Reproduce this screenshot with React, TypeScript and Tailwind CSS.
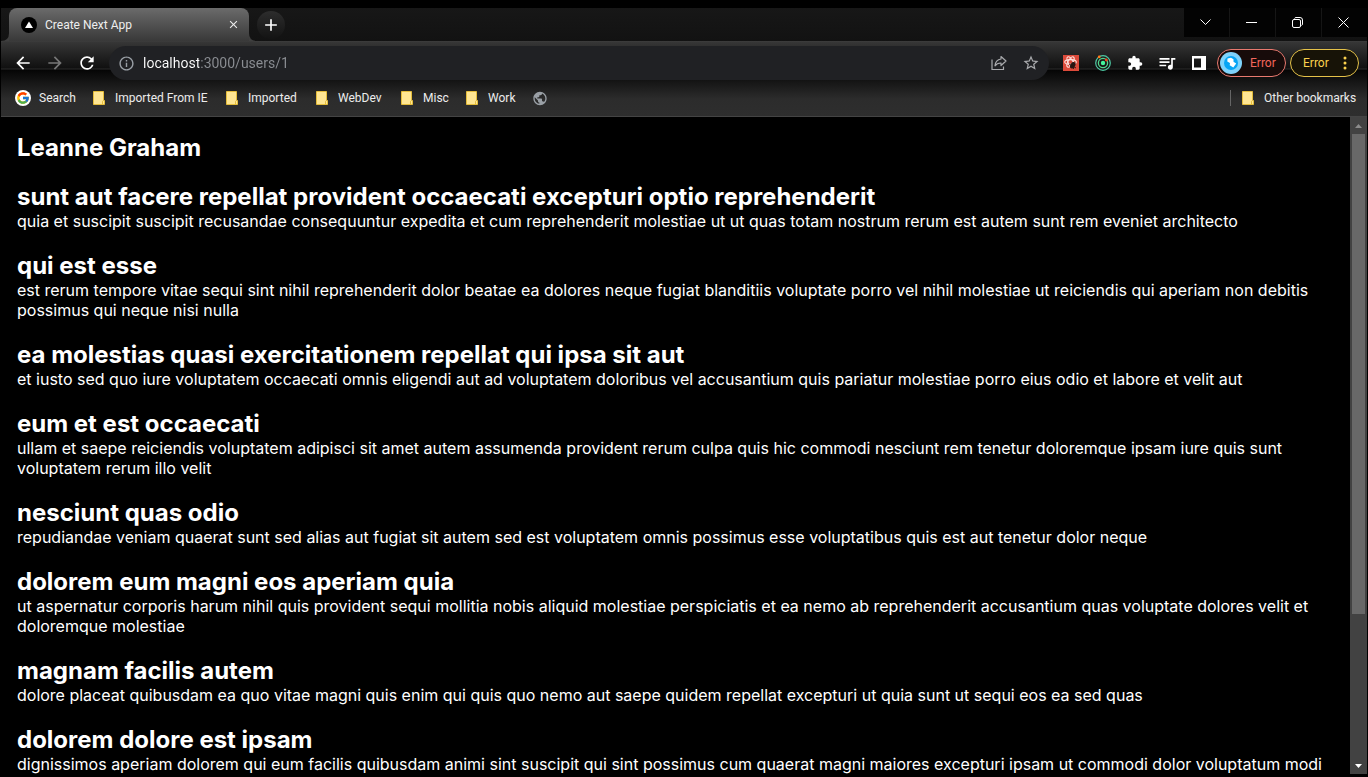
import type { ReactNode } from "react";
import {
  MdAdd,
  MdArrowBack,
  MdArrowForward,
  MdClose,
  MdExtension,
  MdInfoOutline,
  MdPublic,
  MdQueueMusic,
  MdRefresh,
  MdStarBorder,
} from "react-icons/md";
import { FcGoogle } from "react-icons/fc";

const posts = [
  {
    title: "sunt aut facere repellat provident occaecati excepturi optio reprehenderit",
    body: "quia et suscipit suscipit recusandae consequuntur expedita et cum reprehenderit molestiae ut ut quas totam nostrum rerum est autem sunt rem eveniet architecto",
  },
  {
    title: "qui est esse",
    body: "est rerum tempore vitae sequi sint nihil reprehenderit dolor beatae ea dolores neque fugiat blanditiis voluptate porro vel nihil molestiae ut reiciendis qui aperiam non debitis possimus qui neque nisi nulla",
  },
  {
    title: "ea molestias quasi exercitationem repellat qui ipsa sit aut",
    body: "et iusto sed quo iure voluptatem occaecati omnis eligendi aut ad voluptatem doloribus vel accusantium quis pariatur molestiae porro eius odio et labore et velit aut",
  },
  {
    title: "eum et est occaecati",
    body: "ullam et saepe reiciendis voluptatem adipisci sit amet autem assumenda provident rerum culpa quis hic commodi nesciunt rem tenetur doloremque ipsam iure quis sunt voluptatem rerum illo velit",
  },
  {
    title: "nesciunt quas odio",
    body: "repudiandae veniam quaerat sunt sed alias aut fugiat sit autem sed est voluptatem omnis possimus esse voluptatibus quis est aut tenetur dolor neque",
  },
  {
    title: "dolorem eum magni eos aperiam quia",
    body: "ut aspernatur corporis harum nihil quis provident sequi mollitia nobis aliquid molestiae perspiciatis et ea nemo ab reprehenderit accusantium quas voluptate dolores velit et doloremque molestiae",
  },
  {
    title: "magnam facilis autem",
    body: "dolore placeat quibusdam ea quo vitae magni quis enim qui quis quo nemo aut saepe quidem repellat excepturi ut quia sunt ut sequi eos ea sed quas",
  },
  {
    title: "dolorem dolore est ipsam",
    body: "dignissimos aperiam dolorem qui eum facilis quibusdam animi sint suscipit qui sint possimus cum quaerat magni maiores excepturi ipsam ut commodi dolor voluptatum modi",
  },
];

function FolderIcon() {
  return (
    <svg width="12" height="14" viewBox="0 0 12 14" className="shrink-0" aria-hidden="true">
      <path d="M.5.5h10v9h1v4H.5z" fill="#ffe693" stroke="#e5bd3b" />
      <path d="M9.5 13.5v-3.2l1-.8" fill="none" stroke="#e5bd3b" />
    </svg>
  );
}

function ShareIcon() {
  return (
    <svg width="16" height="16" viewBox="0 0 16 16" fill="none" stroke="#a9aaad" strokeWidth="1.2" aria-hidden="true">
      <path d="M1 4.500v10h11.500v-3" />
      <path d="M10 1.500 15 6l-5 4.500V8C7.300 8 5.300 8.800 4 10.800 4.300 7.300 6.200 4.500 10 4z" strokeLinejoin="round" />
    </svg>
  );
}

function ReactDevIcon() {
  return (
    <svg width="16" height="16" viewBox="0 0 16 16" aria-hidden="true">
      <path d="M0 0h16v16H0z" fill="#dc4a3a" />
      <g fill="none" stroke="#ffe3df" strokeWidth="1.1">
        <ellipse cx="7.500" cy="7" rx="5.800" ry="2.400" />
        <ellipse cx="7.500" cy="7" rx="5.800" ry="2.400" transform="rotate(60 7.500 7)" />
        <ellipse cx="7.500" cy="7" rx="5.800" ry="2.400" transform="rotate(120 7.500 7)" />
      </g>
      <ellipse cx="9.800" cy="10.300" rx="2.400" ry="3.400" transform="rotate(30 9.800 10.300)" fill="#2a1512" />
      <path d="m6 9 7 4M7 12.500l5.500-4.500M10 7l.5 7" stroke="#2a1512" strokeWidth=".9" />
    </svg>
  );
}

function RadarIcon() {
  return (
    <svg width="16" height="16" viewBox="0 0 16 16" fill="none" aria-hidden="true">
      <circle cx="8" cy="8" r="7.300" stroke="#4fc9a4" strokeWidth="1.2" />
      <circle cx="8" cy="8" r="4.600" stroke="#52d68c" strokeWidth="1.3" />
      <circle cx="8" cy="8" r="2.200" fill="#45f59b" />
      <circle cx="4.200" cy="1.900" r="1.400" fill="#ff7a1a" />
      <circle cx="11.300" cy="5" r="1.400" fill="#f4481e" />
    </svg>
  );
}

function SidePanelIcon() {
  return (
    <svg width="14" height="14" viewBox="0 0 14 14" aria-hidden="true">
      <path fillRule="evenodd" d="M0 0h14v14H0zM2 2.500v9h7v-9z" fill="#fff" />
    </svg>
  );
}

function AvatarIcon() {
  return (
    <svg width="22" height="22" viewBox="0 0 22 22" className="shrink-0" aria-hidden="true">
      <circle cx="11" cy="11" r="11" fill="#7fd3fb" />
      <circle cx="11" cy="11" r="7" fill="#06a5f5" />
      <path d="M7.500 6.500 11 5.800l2.500 1.500v2.500l2.700 1.700-2.900 4-3.600-2.300.3-2.200-2.700-1.500z" fill="#fff" />
    </svg>
  );
}

function Bookmark({ icon, label, className }: { icon: ReactNode; label: string; className: string }) {
  return (
    <a href="#" aria-label={label} className={`flex shrink-0 items-center whitespace-nowrap ${className}`}>
      {icon}
      {label !== "Site" && label}
    </a>
  );
}

function TabStrip() {
  return (
    <div className="flex h-[33px] bg-linear-to-b from-[#171717] to-[#121212]">
      <svg width="8" height="8" viewBox="0 0 8 8" className="self-end" aria-hidden="true">
        <path d="M8 0Q8 8 0 8h8z" fill="#3f3f3f" />
      </svg>
      <div className="flex w-60 items-center rounded-t-lg bg-linear-to-b from-[#6b6b6b] to-[#393939] pr-2 pl-3">
        <svg width="16" height="16" viewBox="0 0 16 16" aria-hidden="true">
          <circle cx="8" cy="8" r="8" fill="#000" />
          <path d="m8 4.500 4 6.500H4z" fill="#fff" />
        </svg>
        <span className="ml-2 flex-1">Create Next App</span>
        <button aria-label="Close tab" className="flex size-4 items-center justify-center">
          <MdClose size={13} />
        </button>
      </div>
      <svg width="8" height="8" viewBox="0 0 8 8" className="self-end" aria-hidden="true">
        <path d="M0 0q0 8 8 8H0z" fill="#3f3f3f" />
      </svg>
      <button
        aria-label="New tab"
        className="mt-[3px] flex size-7 items-center justify-center rounded-full bg-linear-to-b from-[#2d2d2d] to-[#131313] text-white"
      >
        <MdAdd size={20} />
      </button>
      <div className="ml-auto grid h-[29px] grid-cols-4 gap-px text-white">
        <button aria-label="Search tabs" className="flex w-[45px] items-center justify-center bg-[#030303] pr-0.5">
          <svg width="11" height="7" viewBox="0 0 11 7" fill="none" stroke="currentColor"><path d="m.5.5 5 5 5-5" /></svg>
        </button>
        <button aria-label="Minimize" className="flex w-[45px] items-center justify-center bg-[#030303] pr-0.5">
          <svg width="11" height="1" viewBox="0 0 11 1"><path d="M0 0h11v1H0z" fill="currentColor" /></svg>
        </button>
        <button aria-label="Restore" className="flex w-[45px] items-center justify-center bg-[#030303] pr-0.5">
          <svg width="11" height="11" viewBox="0 0 11 11" fill="none" stroke="currentColor">
            <rect x=".5" y="2.500" width="8" height="8" rx="1.500" />
            <path d="M2.500 1.500q.4-1 1.500-1h4q2.500 0 2.500 2.500v4q0 1-1 1.500" />
          </svg>
        </button>
        <button aria-label="Close" className="flex w-[45px] items-center justify-center bg-[#030303] pr-0.5">
          <svg width="11" height="11" viewBox="0 0 11 11" stroke="currentColor"><path d="m.5.5 10 10M10.500.5l-10 10" /></svg>
        </button>
      </div>
    </div>
  );
}

function Toolbar() {
  return (
    <div className="flex h-11 items-center pr-2 pl-3 text-white">
      <button aria-label="Back"><MdArrowBack size={20} /></button>
      <button aria-label="Forward" className="ml-3 text-[#777777]"><MdArrowForward size={20} /></button>
      <button aria-label="Reload" className="ml-3"><MdRefresh size={20} /></button>
      <div className="ml-3 flex h-[34px] flex-1 items-center rounded-full bg-[#202124] pr-[9px] pl-[9px] text-[#a9aaad]">
        <MdInfoOutline size={17} className="text-[#9aa0a6]" aria-hidden="true" />
        <input
          type="text"
          aria-label="Address"
          defaultValue="localhost:3000/users/1"
          className="ml-2 h-6 min-w-0 flex-1 bg-linear-to-r from-white from-[56px] to-[#8b8e93] to-[56px] bg-clip-text text-sm text-transparent outline-none"
        />
        <button aria-label="Share this page" className="mr-[15px]"><ShareIcon /></button>
        <button aria-label="Bookmark this tab"><MdStarBorder size={18} /></button>
      </div>
      <div className="ml-[14px] flex items-center gap-4">
        <button aria-label="React Developer Tools"><ReactDevIcon /></button>
        <button aria-label="Radar"><RadarIcon /></button>
        <button aria-label="Extensions"><MdExtension size={16} /></button>
        <button aria-label="Media controls" className="-mx-0.5"><MdQueueMusic size={20} /></button>
        <button aria-label="Side panel" className="ml-px"><SidePanelIcon /></button>
      </div>
      <button className="ml-[11px] flex h-7 w-[69px] items-center rounded-full border border-[#e8796f] bg-[#170b0a] pl-0.5 text-[#f2665c]">
        <AvatarIcon />
        <span className="ml-2">Error</span>
      </button>
      <button className="ml-1 flex h-7 w-[69px] items-center rounded-full border border-[#e5c249] bg-[#171307] pl-3 text-[#fbd24e]">
        <span className="flex-1 text-left">Error</span>
        <svg width="4" height="14" viewBox="0 0 4 14" fill="currentColor" className="mr-[11px]" aria-hidden="true">
          <circle cx="2" cy="2" r="1.500" />
          <circle cx="2" cy="7" r="1.500" />
          <circle cx="2" cy="12" r="1.500" />
        </svg>
      </button>
    </div>
  );
}

function BookmarksBar() {
  return (
    <nav aria-label="Bookmarks" className="flex h-[26px] items-center pr-[10px] pl-[14px] text-[#ececec]">
      <Bookmark
        label="Search"
        className="w-[78px] gap-2"
        icon={<span className="flex size-4 items-center justify-center rounded-full bg-white"><FcGoogle size={14} /></span>}
      />
      <Bookmark label="Imported From IE" className="w-[133px] gap-[10px]" icon={<FolderIcon />} />
      <Bookmark label="Imported" className="w-[90px] gap-[10px]" icon={<FolderIcon />} />
      <Bookmark label="WebDev" className="w-[85px] gap-[10px]" icon={<FolderIcon />} />
      <Bookmark label="Misc" className="w-[65px] gap-[10px]" icon={<FolderIcon />} />
      <Bookmark label="Work" className="w-[66px] gap-[10px]" icon={<FolderIcon />} />
      <Bookmark label="Site" className="w-4" icon={<MdPublic size={17} className="text-[#9aa0a6]" />} />
      <div className="ml-auto flex h-4 items-center border-l border-[#666666] pl-[11px]">
        <Bookmark label="Other bookmarks" className="w-[115px] gap-[10px]" icon={<FolderIcon />} />
      </div>
    </nav>
  );
}

function ScrollRail() {
  return (
    <div className="mb-[3px] flex w-[17px] shrink-0 flex-col bg-[#424242]" aria-hidden="true">
      <div className="flex h-[17px] items-center justify-center">
        <svg width="7" height="4" viewBox="0 0 7 4"><path d="M3.500 0 7 4H0z" fill="#8b8b8b" /></svg>
      </div>
      <div className="flex-1 px-0.5">
        <div className="h-[77%] bg-[#686868]" />
      </div>
      <div className="flex h-[17px] items-center justify-center">
        <svg width="7" height="4" viewBox="0 0 7 4"><path d="M0 0h7L3.500 4z" fill="#fff" /></svg>
      </div>
    </div>
  );
}

export default function App() {
  return (
    <div className="flex h-screen flex-col bg-black px-px pt-2 text-white">
      <header className="shrink-0 font-['Roboto',sans-serif] text-xs text-[#eeeeee]">
        <TabStrip />
        <div className="h-[76px] border-b border-[#444444] bg-[linear-gradient(#3f3f3f_0px,#363636_1px,#101010_27px,#2b2b2b_28px,#050505_29px,#171717_42px,#2c2c2c_58px,#2e2e2e_75px)]">
          <Toolbar />
          <BookmarksBar />
        </div>
      </header>
      <div className="flex min-h-0 flex-1">
        <main className="min-w-0 flex-1 overflow-y-auto p-4 font-['Inter',sans-serif] text-base leading-5 [scrollbar-width:none]">
          <h1 className="text-2xl leading-[29px] font-bold">Leanne Graham</h1>
          {posts.map((post) => (
            <article key={post.title} className="mt-5">
              <h2 className="text-2xl leading-[29px] font-bold">{post.title}</h2>
              <p>{post.body}</p>
            </article>
          ))}
        </main>
        <ScrollRail />
      </div>
    </div>
  );
}
